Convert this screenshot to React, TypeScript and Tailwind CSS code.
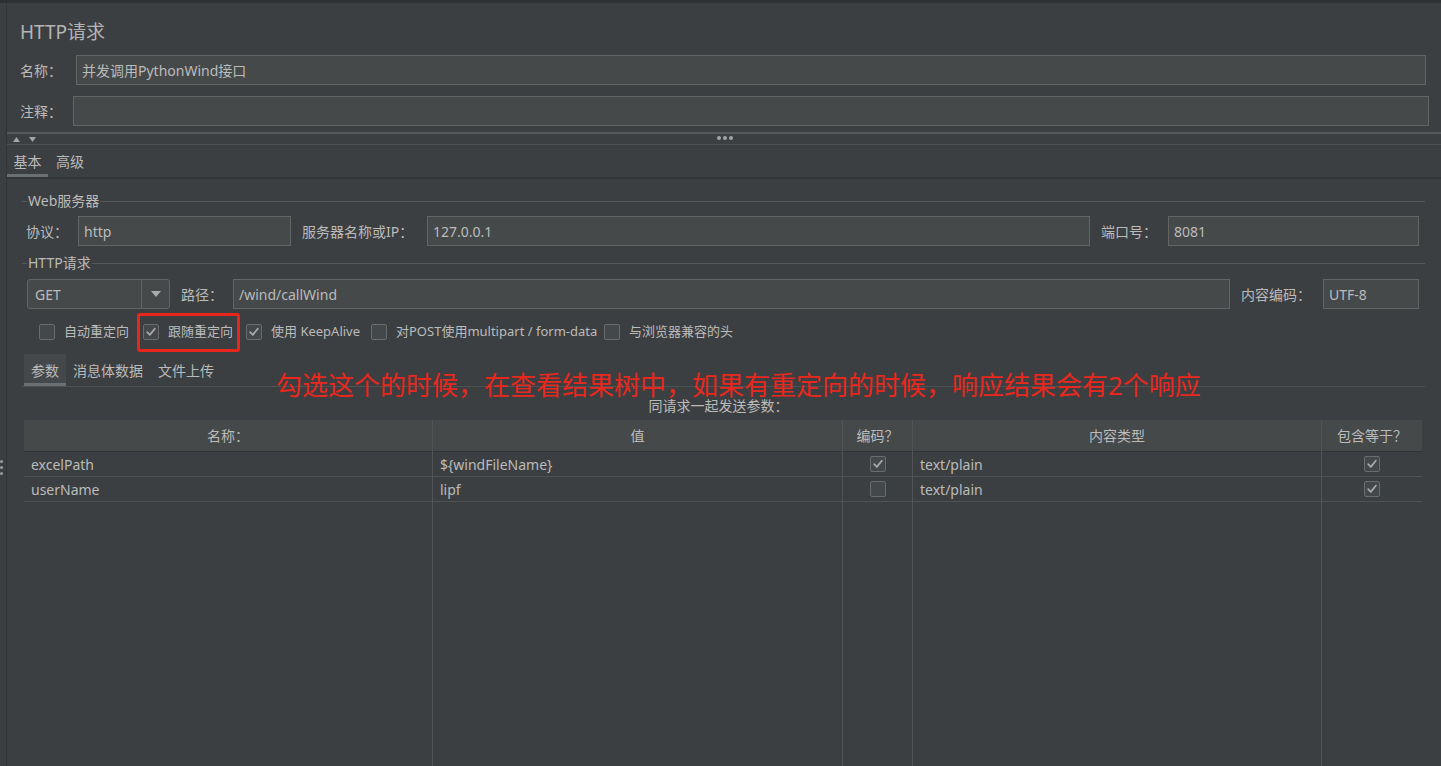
import clsx from 'clsx';

const font = "font-['Noto_Sans','Noto_Sans_CJK_SC',sans-serif]";

function Field({ value, className }: { value?: string; className?: string }) {
  return (
    <div
      className={clsx(
        'flex h-[30px] items-center border border-[#646464] bg-[#45494a] px-[5px] text-[14px] text-[#bbbbbb]',
        className,
      )}
    >
      {value}
    </div>
  );
}

function Check({ checked }: { checked?: boolean }) {
  return (
    <div className="flex h-[16px] w-[16px] shrink-0 items-center justify-center rounded-[2px] border border-[#6b6b6b] bg-[#43494a]">
      {checked && (
        <svg width="12" height="12" viewBox="0 0 12 12">
          <path d="M2.2 6.2 L4.8 8.9 L9.8 2.8" fill="none" stroke="#a8a8a8" strokeWidth="1.8" strokeLinecap="round" strokeLinejoin="round" />
        </svg>
      )}
    </div>
  );
}

function SectionTitle({ title }: { title: string }) {
  return (
    <div className="flex h-[20px] items-center">
      <div className="h-px w-[5px] bg-[#55595b]" />
      <span className="px-[1px] text-[14px] leading-[20px]">{title}</span>
      <div className="h-px flex-1 bg-[#55595b]" />
    </div>
  );
}

const options = [
  { label: '自动重定向', checked: false, w: 'w-[104px]' },
  { label: '跟随重定向', checked: true, w: 'w-[103px]' },
  { label: '使用 KeepAlive', checked: true, w: 'w-[125px]' },
  { label: '对POST使用multipart / form-data', checked: false, w: 'w-[233px]' },
  { label: '与浏览器兼容的头', checked: false, w: '' },
];

const columns = [
  { title: '名称：', w: 'w-[409px]', cells: ['excelPath', 'userName'], align: 'left' },
  { title: '值', w: 'w-[410px]', cells: ['${windFileName}', 'lipf'], align: 'left' },
  { title: '编码？', w: 'w-[70px]', cells: [true, false], align: 'check' },
  { title: '内容类型', w: 'w-[409px]', cells: ['text/plain', 'text/plain'], align: 'left' },
  { title: '包含等于？', w: 'w-[100px]', cells: [true, true], align: 'check' },
];

export default function App() {
  return (
    <div className={clsx('relative flex h-[766px] w-[1441px] flex-col overflow-hidden bg-[#3c3f41] text-[#bbbbbb]', font)}>
      <div className="h-[3px] shrink-0 bg-[#2e3032]" />
      <div className="flex flex-1">
        {/* left splitter gutter */}
        <div className="relative w-[6px] shrink-0">
          <div className="absolute left-0 top-[457px] flex flex-col gap-[3px]">
            <div className="h-[3px] w-[3px] rounded-full bg-[#9a9da0]" />
            <div className="h-[3px] w-[3px] rounded-full bg-[#9a9da0]" />
            <div className="h-[3px] w-[3px] rounded-full bg-[#9a9da0]" />
          </div>
        </div>
        <div className="w-px shrink-0 bg-[#323436]" />

        <div className="flex flex-1 flex-col">
          {/* header */}
          <div className="pl-[13px] pt-[17px] text-[19px] leading-[24px] text-[#b4b4b4]">HTTP请求</div>
          <div className="mt-[11px] flex items-center pl-[13px] pr-[15px]">
            <span className="w-[56px] text-[14px]">名称：</span>
            <Field value="并发调用PythonWind接口" className="flex-1" />
          </div>
          <div className="mt-[11px] flex items-center pl-[13px] pr-[12px]">
            <span className="w-[53px] text-[14px]">注释：</span>
            <Field className="flex-1" />
          </div>

          {/* splitter */}
          <div className="mt-[6px] h-[2px] bg-[#56595b]" />
          <div className="relative flex h-[10px] items-center">
            <div className="ml-[6px] flex gap-[9px]">
              <svg width="7" height="5" viewBox="0 0 7 5"><path d="M0 5 L3.5 0 L7 5 Z" fill="#a2a5a8" /></svg>
              <svg width="7" height="5" viewBox="0 0 7 5"><path d="M0 0 L3.5 5 L7 0 Z" fill="#a2a5a8" /></svg>
            </div>
            <div className="absolute left-[710px] top-[2px] flex gap-[2px]">
              <div className="h-[4px] w-[4px] rounded-full bg-[#a2a5a8]" />
              <div className="h-[4px] w-[4px] rounded-full bg-[#a2a5a8]" />
              <div className="h-[4px] w-[4px] rounded-full bg-[#a2a5a8]" />
            </div>
          </div>
          <div className="h-px bg-[#4f5254]" />

          {/* tabs */}
          <div className="flex h-[32px] items-stretch text-[14px]">
            <div className="flex w-[41px] items-center justify-center border-b-[3px] border-[#6d7073] pt-[3px]">基本</div>
            <div className="flex items-center px-[8px]">高级</div>
          </div>
          <div className="h-[2px] bg-[#323436]" />

          {/* body */}
          <div className="flex flex-1 flex-col pl-[15px] pr-[16px]">
            <div className="mt-[12px]">
              <SectionTitle title="Web服务器" />
            </div>
            <div className="mt-[5px] flex items-center pl-[4px] pr-[6px] text-[14px]">
              <span className="w-[52px]">协议：</span>
              <Field value="http" className="w-[213px]" />
              <span className="ml-[11px] w-[125px]">服务器名称或IP：</span>
              <Field value="127.0.0.1" className="flex-1" />
              <span className="ml-[11px] w-[67px]">端口号：</span>
              <Field value="8081" className="w-[251px]" />
            </div>

            <div className="mt-[7px]">
              <SectionTitle title="HTTP请求" />
            </div>
            <div className="mt-[6px] flex items-center pl-[5px] pr-[6px] text-[14px]">
              <div className="flex h-[30px] w-[143px] items-stretch rounded-[3px] border border-[#646464] bg-[#45494a]">
                <span className="flex flex-1 items-center pl-[7px]">GET</span>
                <div className="flex w-[28px] items-center justify-center border-l border-[#646464]">
                  <svg width="10" height="6" viewBox="0 0 10 6"><path d="M0 0 L10 0 L5 6 Z" fill="#a9acae" /></svg>
                </div>
              </div>
              <span className="ml-[11px] w-[52px]">路径：</span>
              <Field value="/wind/callWind" className="flex-1" />
              <span className="ml-[11px] w-[82px]">内容编码：</span>
              <Field value="UTF-8" className="w-[96px]" />
            </div>

            <div className="mt-[13px] flex h-[20px] items-center pl-[17px] text-[13px]">
              {options.map((o) => (
                <div key={o.label} className={clsx('flex items-center gap-[9px]', o.w)}>
                  <Check checked={o.checked} />
                  <span className="whitespace-nowrap">{o.label}</span>
                </div>
              ))}
            </div>

            {/* sub tabs */}
            <div className="mt-[12px] flex h-[33px] items-stretch border-b border-[#4f5254] pl-[2px] text-[14px]">
              <div className="flex w-[42px] items-center justify-center border-b-[3px] border-[#6d7073] bg-[#45484a] pt-[3px]">参数</div>
              <div className="flex items-center pl-[7px] pr-[9px]">消息体数据</div>
              <div className="flex items-center px-[6px]">文件上传</div>
            </div>

            <div className="mt-[8px] flex h-[20px] items-center justify-center pr-[10px] text-[14px]">同请求一起发送参数：</div>

            {/* params table */}
            <div className="mt-[5px] flex flex-1 pl-[2px] text-[14px]">
              {columns.map((c, i) => (
                <div key={c.title} className={clsx('flex flex-col', c.w, i < 4 && 'border-r border-[#505456]')}>
                  <div className="flex h-[32px] items-center justify-center border-b border-[#313335] bg-[#45494a]">{c.title}</div>
                  {c.cells.map((cell, j) => (
                    <div
                      key={j}
                      className={clsx('flex h-[25px] items-center border-b border-[#4e5254]', c.align === 'check' ? 'justify-center' : 'pl-[7px]')}
                    >
                      {typeof cell === 'boolean' ? <Check checked={cell} /> : cell}
                    </div>
                  ))}
                </div>
              ))}
            </div>
          </div>
        </div>
      </div>

      {/* annotation overlay */}
      <div className="pointer-events-none absolute left-[137px] top-[313px] h-[39px] w-[103px] rounded-[3px] border-[3px] border-[#e8261c]" />
      <div className="pointer-events-none absolute left-[276px] top-[369px] whitespace-nowrap text-[26px] leading-[32px] text-[#e8271d]">
        勾选这个的时候，在查看结果树中，如果有重定向的时候，响应结果会有2个响应
      </div>
    </div>
  );
}
